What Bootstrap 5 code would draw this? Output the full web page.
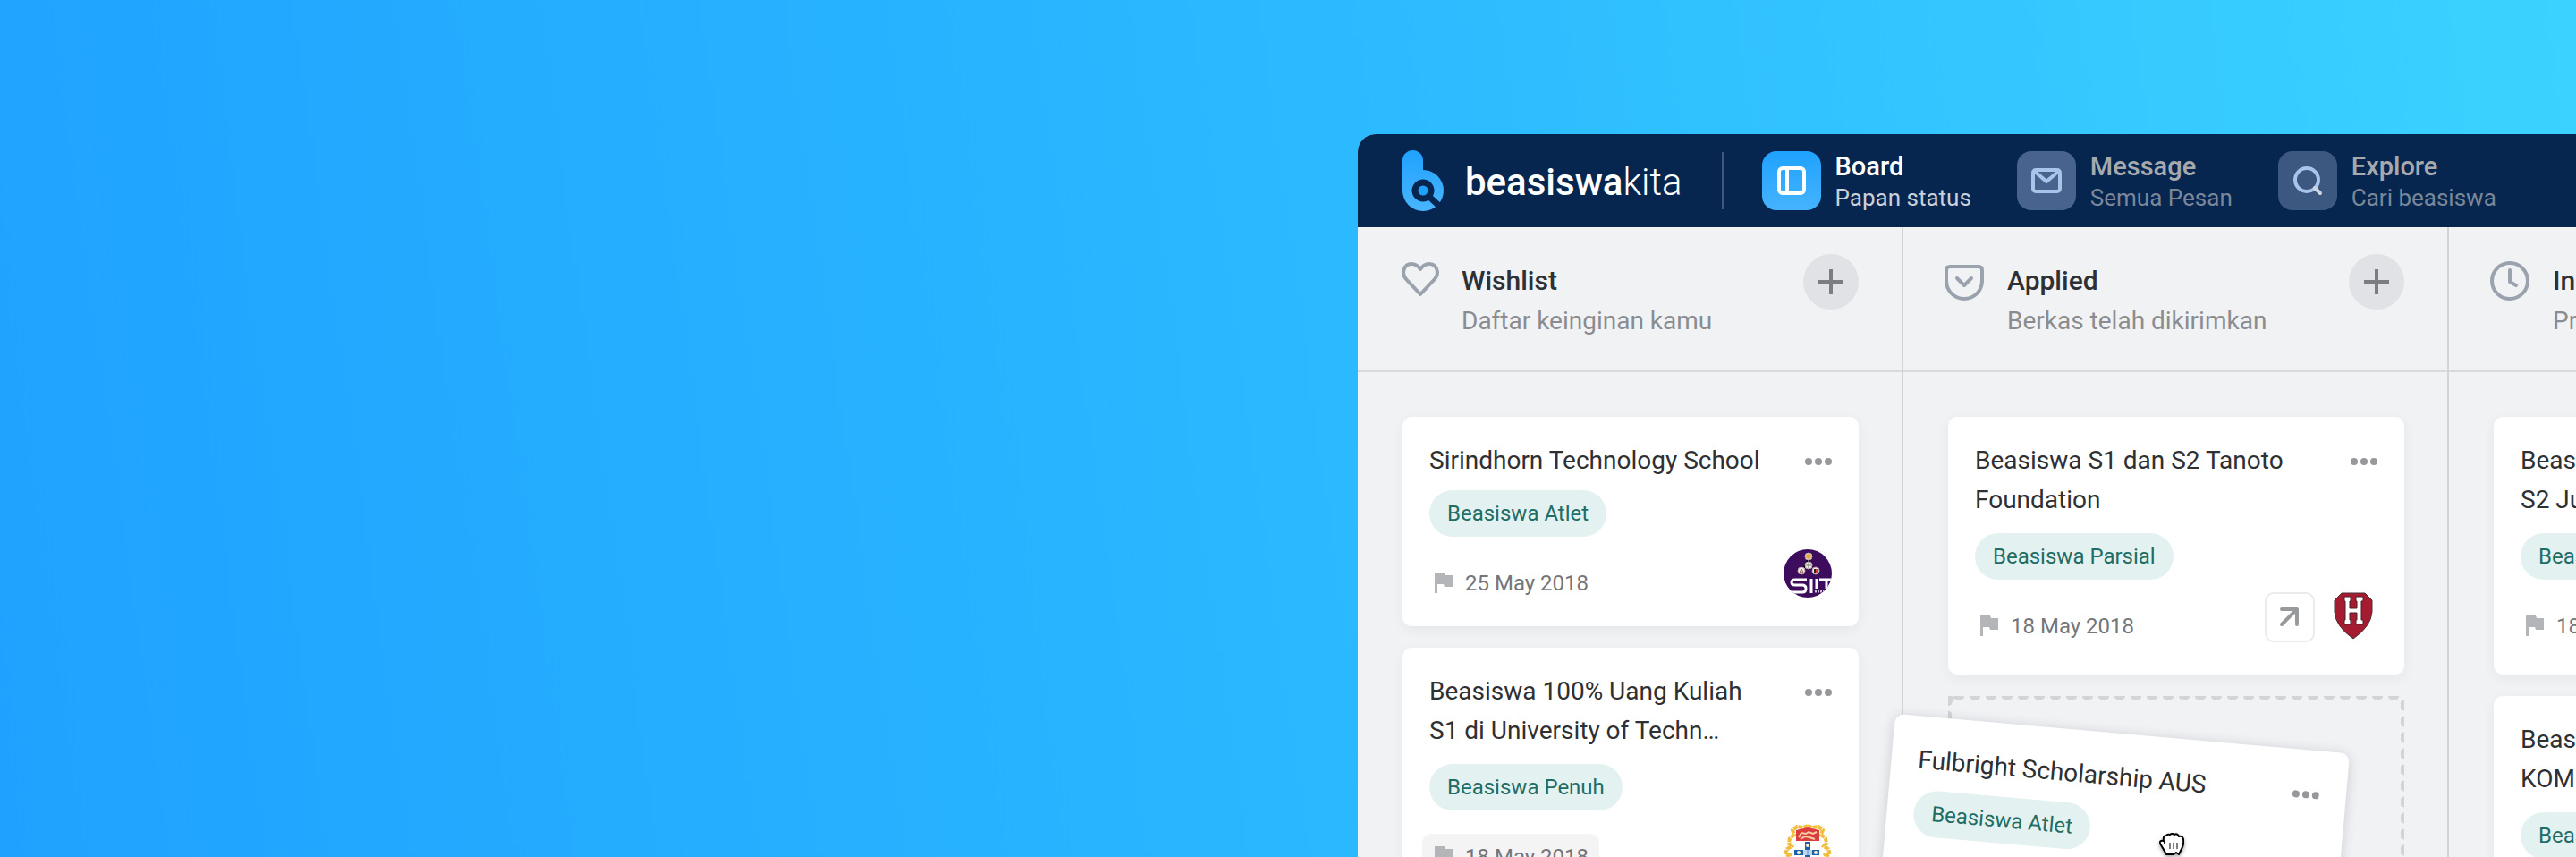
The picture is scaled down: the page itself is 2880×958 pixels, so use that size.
<!DOCTYPE html>
<html lang="id">
<head>
<meta charset="utf-8">
<meta name="viewport" content="width=device-width, initial-scale=1">
<title>Beasiswakita – Board</title>
<link href="https://cdn.jsdelivr.net/npm/bootstrap@5.3.0/dist/css/bootstrap.min.css" rel="stylesheet">
<style>
  :root { --navy: #062650; --ink: #2f3033; --muted: #8b8c8f; --teal: #1f6d64; --mint: #e4f1f1; --rule: #d3d4d7; --surface: #f1f2f4; }
  body { font-family: Roboto, "Liberation Sans", sans-serif; color: var(--ink); background: linear-gradient(82deg, #1fa2ff 0%, #2ab8ff 50%, #3bd2ff 100%); }
  .app-window { margin-left: calc(50% + 78px); margin-top: 150px; border-top-left-radius: 20px; background: var(--surface); }
  .app-bar { height: 104px; padding: 0 50px; background: var(--navy); }
  .brand-name { font-size: 42px; line-height: 48px; color: #fff; font-weight: 500; margin-left: 24px; padding-top: 4px; }
  .brand-name span { font-weight: 300; }
  .bar-rule { width: 2px; height: 64px; background: #3f577a; margin: 0 43px 0 44px; }
  .main-links { gap: 51px; }
  .main-link { gap: 16px; color: #fff; text-decoration: none; white-space: nowrap; }
  .main-link .tile { width: 66px; height: 66px; border-radius: 16px; background: #48648e; }
  .main-link .tile-on { background: linear-gradient(#1fa2ff, #45b3ff); }
  .main-link .tile-dim { background: #3c5880; }
  .link-title { font-size: 29px; line-height: 36px; font-weight: 500; padding-top: 2px; }
  .link-note { font-size: 26px; line-height: 34px; color: #c9d0da; }
  .main-link.idle .link-title { color: #a6a9ae; }
  .main-link.idle .link-note { color: #7a8798; }
  .lane { flex: 0 0 610px; border-right: 2px solid var(--rule); }
  .lane-head { height: 162px; border-bottom: 2px solid #d9dadd; padding: 30px 48px 0 46px; }
  .lane-icon { width: 48px; height: 48px; margin-top: 6px; }
  .lane-text { padding-left: 22px; }
  .lane-title { font-size: 30px; line-height: 44px; font-weight: 500; margin: 8px 0 0; }
  .lane-note { font-size: 28px; line-height: 46px; color: var(--muted); margin: 0; }
  .add-btn { width: 62px; height: 62px; border: 0; border-radius: 50%; background: #e1e2e6; }
  .lane-body { padding: 50px 48px 0 50px; gap: 24px; }
  .lane-card { background: #fff; border-radius: 10px; padding: 27px 30px 22px; box-shadow: 0 4px 14px rgba(40, 50, 70, .06); }
  .lane-card.tall { padding-bottom: 28px; }
  .item-title { font-size: 28px; line-height: 44px; font-weight: 400; margin: 0 0 11px; white-space: nowrap; }
  .tall .item-title { margin-bottom: 15px; }
  .more-btn { width: 32px; height: 46px; border: 0; background: none; padding: 0; }
  .tag { display: inline-flex; align-items: center; height: 52px; padding: 0 20px; border-radius: 26px; background: var(--mint); color: var(--teal); font-size: 24px; white-space: nowrap; }
  .item-foot { height: 64px; margin-top: 14px; }
  .due { height: 52px; margin-left: -8px; padding: 0 12px; gap: 12px; border-radius: 10px; font-size: 24px; color: #75767a; white-space: nowrap; }
  .due-fill { background: #f4f4f5; }
  .open-btn { width: 56px; height: 56px; border: 2px solid #ebebec; border-radius: 10px; background: #fff; padding: 0; }
  .drop-slot { height: 234px; }
  .drop-slot > .outline { overflow: hidden; }
  .dragged { left: -59px; top: 20px; transform: rotate(5deg); transform-origin: top left; box-shadow: 0 2px 14px rgba(40, 50, 70, .2); z-index: 2; }
  .grab { left: 236px; top: 153px; z-index: 3; filter: drop-shadow(0 2px 2px rgba(0, 0, 0, .35)); }
</style>
</head>
<body class="vh-100 overflow-hidden d-flex flex-column">
<svg width="0" height="0" class="position-absolute" aria-hidden="true">
  <defs>
    <symbol id="dots" viewBox="0 0 32 10"><g fill="#97989b"><circle cx="6" cy="5" r="4"/><circle cx="17" cy="5" r="4"/><circle cx="28" cy="5" r="4"/></g></symbol>
    <symbol id="flag" viewBox="0 0 24 24"><path d="M2 0H13L14 3H22V16H13L12 13H5V23H2Z" fill="#b4b5b8"/></symbol>
    <symbol id="plus" viewBox="0 0 28 28"><path d="M14 0V28M0 14H28" stroke="#7c7d80" stroke-width="4"/></symbol>
    <symbol id="arrow" viewBox="0 0 24 24"><path d="M3 3H20V20M20 3L3 20" fill="none" stroke="#98999b" stroke-width="4" stroke-linecap="round" stroke-linejoin="round"/></symbol>
  </defs>
</svg>

<main class="app-window flex-grow-1 d-flex flex-column overflow-hidden">
  <nav class="app-bar d-flex align-items-center flex-shrink-0">
    <a href="#" class="d-flex align-items-center text-decoration-none">
      <svg width="46" height="68" viewBox="0 0 46 68" aria-hidden="true">
        <defs><linearGradient id="brandFill" x2="0" y2="1"><stop stop-color="#1fa2ff"/><stop offset="1" stop-color="#49b5ff"/></linearGradient></defs>
        <path d="M0 11.500A11.500 11.500 0 0 1 23 11.500V22A23 23 0 1 1 0 45Z" fill="url(#brandFill)"/>
        <circle cx="23" cy="45" r="9" fill="#1fa2ff" stroke="#062650" stroke-width="7"/>
        <path d="M30 52L44 65" stroke="#062650" stroke-width="7"/>
      </svg>
      <span class="brand-name">beasiswa<span>kita</span></span>
    </a>
    <div class="bar-rule flex-shrink-0"></div>
    <div class="main-links d-flex">
      <a href="#" class="main-link d-flex align-items-center" aria-current="page">
        <span class="tile tile-on d-flex align-items-center justify-content-center"><svg width="34" height="34" viewBox="0 0 34 34" fill="none" stroke="#fff" stroke-width="4"><rect x="3" y="3" width="28" height="28" rx="4"/><path d="M12 3V31"/></svg></span>
        <span><span class="link-title d-block">Board</span><span class="link-note d-block">Papan status</span></span>
      </a>
      <a href="#" class="main-link idle d-flex align-items-center">
        <span class="tile d-flex align-items-center justify-content-center"><svg width="34" height="30" viewBox="0 0 34 30" fill="none" stroke="#a9c4e8" stroke-width="4" stroke-linejoin="round"><rect x="2" y="3" width="30" height="24" rx="3"/><path d="M3 4L17 16L31 4"/></svg></span>
        <span><span class="link-title d-block">Message</span><span class="link-note d-block">Semua Pesan</span></span>
      </a>
      <a href="#" class="main-link idle d-flex align-items-center">
        <span class="tile tile-dim d-flex align-items-center justify-content-center"><svg width="34" height="34" viewBox="0 0 34 34" fill="none" stroke="#a9c4e8" stroke-width="4" stroke-linecap="round"><circle cx="16" cy="16" r="13"/><path d="M25 25L31 31" stroke="#ccd5e0"/></svg></span>
        <span><span class="link-title d-block">Explore</span><span class="link-note d-block">Cari beasiswa</span></span>
      </a>
    </div>
  </nav>

  <div class="d-flex flex-grow-1">
    <section class="lane">
      <header class="lane-head d-flex align-items-start">
        <svg class="lane-icon" viewBox="0 0 48 48" fill="none" stroke="#9aa3ad" stroke-width="4" stroke-linejoin="round"><path d="M24 39L8 22C2 15 6 5 14 5C19 5 22 8 24 11C26 8 29 5 34 5C42 5 46 15 40 22Z"/></svg>
        <div class="lane-text flex-grow-1"><h2 class="lane-title">Wishlist</h2><p class="lane-note">Daftar keinginan kamu</p></div>
        <button class="add-btn d-flex align-items-center justify-content-center" aria-label="Tambah ke Wishlist"><svg width="28" height="28"><use href="#plus"/></svg></button>
      </header>
      <div class="lane-body d-flex flex-column">
        <article class="lane-card">
          <div class="d-flex justify-content-between"><h3 class="item-title">Sirindhorn Technology School</h3><button class="more-btn d-flex align-items-center" aria-label="Menu"><svg width="32" height="10"><use href="#dots"/></svg></button></div>
          <span class="tag">Beasiswa Atlet</span>
          <div class="item-foot d-flex justify-content-between">
            <span class="due d-flex align-items-center align-self-end"><svg width="24" height="24"><use href="#flag"/></svg>25 May 2018</span>
            <svg width="54" height="54" viewBox="0 0 54 54" aria-hidden="true">
              <defs><clipPath id="disc"><circle cx="27" cy="27" r="27"/></clipPath></defs>
              <g clip-path="url(#disc)"><rect width="54" height="54" fill="#3d0c5c"/>
              <path d="M28 8V18L20 24M28 18L36 24" stroke="#a08cb0" stroke-width="1"/>
              <g fill="#f2eee6" stroke="#b3a7a8"><circle cx="28" cy="8" r="4"/><circle cx="28" cy="18" r="4"/><circle cx="20" cy="24" r="4"/><circle cx="36" cy="24" r="4"/></g>
              <circle cx="28" cy="8" r="3" fill="#e2aa4c"/><path d="M28 15V21M25 18H31" stroke="#777"/><path d="M20 22L22 26H18Z" fill="none" stroke="#9a4a50"/><path d="M34 22H36V26H34Z" fill="#222"/><path d="M36 22H39V26H36Z" fill="#d93a33"/>
              <path d="M26 34H13Q9 34 9 37Q9 40 13 40H21Q25 40 25 44Q25 48 21 48H8M31 33V49M37 33V44M40 34H54M48 34V44" fill="none" stroke="#fff" stroke-width="3"/><path d="M35 47H45" stroke="#cfc3d6" stroke-width="3" stroke-dasharray="2 1"/></g>
            </svg>
          </div>
        </article>
        <article class="lane-card tall">
          <div class="d-flex justify-content-between"><h3 class="item-title">Beasiswa 100% Uang Kuliah<br>S1 di University of Techn…</h3><button class="more-btn d-flex align-items-center" aria-label="Menu"><svg width="32" height="10"><use href="#dots"/></svg></button></div>
          <span class="tag">Beasiswa Penuh</span>
          <div class="item-foot d-flex justify-content-between">
            <span class="due due-fill d-flex align-items-center align-self-end"><svg width="24" height="24"><use href="#flag"/></svg>18 May 2018</span>
            <svg width="54" height="64" viewBox="0 0 54 64" aria-hidden="true">
              <path d="M27 3L22 5L15 4L10 8L12 13L7 17L6 23L9 26L4 29L2 35L7 36L3 42L8 48L6 54M27 3L32 5L39 4L44 8L42 13L47 17L48 23L45 26L50 29L52 35L47 36L51 42L46 48L48 54" fill="none" stroke="#f0bd3c" stroke-width="4" stroke-dasharray="5 1"/>
              <path d="M14 8L27 5L40 8V20H14Z" fill="#dc3b40"/><path d="M14 20H40V40Q40 52 27 58Q14 52 14 40Z" fill="#fff"/>
              <path d="M17 16L20 11L25 12L28 10L33 12L37 10M19 18L24 15L29 16L35 18" fill="none" stroke="#f6cfa0" stroke-width="2"/>
              <path d="M24 21H30V30H40V36H30V50H24V36H12V30H24Z" fill="#1d62a8"/><path d="M22 30H32V36H22Z" fill="#b9d8f0"/><path d="M27 30V36" stroke="#5b91c4"/>
              <g fill="#fff3c4"><circle cx="27" cy="25" r="2"/><circle cx="17" cy="33" r="2"/><circle cx="36" cy="33" r="2"/><circle cx="27" cy="42" r="2"/></g>
            </svg>
          </div>
        </article>
      </div>
    </section>

    <section class="lane">
      <header class="lane-head d-flex align-items-start">
        <svg class="lane-icon" viewBox="0 0 48 48" fill="none" stroke="#9aa3ad" stroke-width="4" stroke-linecap="round" stroke-linejoin="round"><path d="M6 8H38Q42 8 42 12V24A20 20 0 0 1 2 24V12Q2 8 6 8ZM14 21L22 29L30 21"/></svg>
        <div class="lane-text flex-grow-1"><h2 class="lane-title">Applied</h2><p class="lane-note">Berkas telah dikirimkan</p></div>
        <button class="add-btn d-flex align-items-center justify-content-center" aria-label="Tambah ke Applied"><svg width="28" height="28"><use href="#plus"/></svg></button>
      </header>
      <div class="lane-body d-flex flex-column">
        <article class="lane-card tall">
          <div class="d-flex justify-content-between"><h3 class="item-title">Beasiswa S1 dan S2 Tanoto<br>Foundation</h3><button class="more-btn d-flex align-items-center" aria-label="Menu"><svg width="32" height="10"><use href="#dots"/></svg></button></div>
          <span class="tag">Beasiswa Parsial</span>
          <div class="item-foot d-flex">
            <span class="due d-flex align-items-center align-self-end me-auto"><svg width="24" height="24"><use href="#flag"/></svg>18 May 2018</span>
            <button class="open-btn d-flex align-items-center justify-content-center me-3" aria-label="Buka"><svg width="24" height="24"><use href="#arrow"/></svg></button>
            <svg width="54" height="54" viewBox="0 0 54 54" aria-hidden="true">
              <path d="M14 1H40L48 9V22Q47 38 27 52Q7 38 6 22V9Z" fill="#a51c30" stroke="#4b3237" stroke-width="1"/>
              <path d="M17 5H24V10H23V18H31V10H30V5H38V10H36V31H38V36H30V31H31V23H23V31H24V36H17V31H18V10H17Z" fill="#fff" stroke="#4a2028" stroke-width="1"/>
            </svg>
          </div>
        </article>
        <div class="drop-slot position-relative">
          <svg class="outline w-100 h-100 d-block" aria-hidden="true"><rect width="100%" height="100%" rx="10" fill="none" stroke="#d3d4d8" stroke-width="8" stroke-linecap="round" stroke-dasharray="4 14"/></svg>
          <article class="lane-card dragged position-absolute w-100">
            <div class="d-flex justify-content-between"><h3 class="item-title">Fulbright Scholarship AUS</h3><button class="more-btn d-flex align-items-center" aria-label="Menu"><svg width="32" height="10"><use href="#dots"/></svg></button></div>
            <span class="tag">Beasiswa Atlet</span>
            <div class="item-foot d-flex"><span class="due d-flex align-items-center align-self-end"><svg width="24" height="24"><use href="#flag"/></svg>18 May 2018</span></div>
          </article>
          <svg class="grab position-absolute" width="28" height="26" viewBox="0 0 28 26" aria-hidden="true">
            <path d="M8 24L4 17L1 12Q0 8 5 9Q4 3 8 3Q9 1 12 2Q14 0 17 2Q20 0 22 4Q26 3 27 7Q28 13 25 18L22 24L19 22L16 24Z" fill="#fff" stroke="#000" stroke-width="2" stroke-linejoin="round"/><path d="M5 9L6 13M12 11V18M16 11V18M20 11V18" stroke="#000" stroke-width="1"/>
          </svg>
        </div>
      </div>
    </section>

    <section class="lane">
      <header class="lane-head d-flex align-items-start">
        <svg class="lane-icon" viewBox="0 0 48 48" fill="none" stroke="#9aa3ad" stroke-width="4" stroke-linecap="round" stroke-linejoin="round"><circle cx="22" cy="24" r="20"/><path d="M22 12V25L29 29"/></svg>
        <div class="lane-text flex-grow-1"><h2 class="lane-title">In Progress</h2><p class="lane-note">Proses seleksi</p></div>
        <button class="add-btn d-flex align-items-center justify-content-center" aria-label="Tambah ke In Progress"><svg width="28" height="28"><use href="#plus"/></svg></button>
      </header>
      <div class="lane-body d-flex flex-column">
        <article class="lane-card tall">
          <h3 class="item-title">Beasiswa S1 dan<br>S2 Jurusan Teknik</h3>
          <span class="tag">Beasiswa Penuh</span>
          <div class="item-foot d-flex"><span class="due d-flex align-items-center align-self-end"><svg width="24" height="24"><use href="#flag"/></svg>18 May 2018</span></div>
        </article>
        <article class="lane-card tall">
          <h3 class="item-title">Beasiswa S2<br>KOMINFO</h3>
          <span class="tag">Beasiswa Penuh</span>
          <div class="item-foot d-flex"><span class="due d-flex align-items-center align-self-end"><svg width="24" height="24"><use href="#flag"/></svg>18 May 2018</span></div>
        </article>
      </div>
    </section>
  </div>
</main>
<script src="https://cdn.jsdelivr.net/npm/bootstrap@5.3.0/dist/js/bootstrap.bundle.min.js"></script>
</body>
</html>
